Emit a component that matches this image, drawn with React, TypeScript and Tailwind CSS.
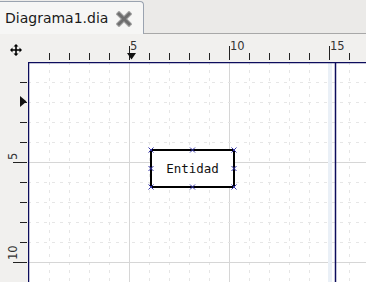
import React from "react";

const W = 366;

function HRuler() {
  const ticks: React.ReactNode[] = [];
  for (let k = 0; k < 17; k++) {
    const x = 21 + 20 * k;
    const major = (k + 1) % 5 === 0;
    ticks.push(
      <line key={k} x1={x + 0.5} x2={x + 0.5} y1={major ? 12 : 19} y2={26} stroke="#222" strokeWidth={1} />
    );
  }
  return (
    <svg width={338} height={28} className="block">
      {ticks}
      {[
        [102, "5"],
        [202, "10"],
        [302, "15"],
      ].map(([x, t]) => (
        <text key={t as string} x={x as number} y={15.5} fontSize={11.5} fill="#333" fontFamily="'DejaVu Sans', sans-serif">
          {t}
        </text>
      ))}
      <polygon points="99,19 108,19 103.5,25.5" fill="#111" />
    </svg>
  );
}

function VRuler() {
  const ticks: React.ReactNode[] = [];
  for (let k = 1; k < 12; k++) {
    const y = 20 * k;
    const major = k % 5 === 0;
    ticks.push(
      <line key={k} y1={y + 0.5} y2={y + 0.5} x1={major ? 13 : 20} x2={27} stroke="#222" strokeWidth={1} />
    );
  }
  return (
    <svg width={28} height={220} className="block">
      {ticks}
      <text transform="translate(16.5,98) rotate(-90)" fontSize={11.5} fill="#333" fontFamily="'DejaVu Sans', sans-serif">
        5
      </text>
      <text transform="translate(17,198) rotate(-90)" fontSize={11.5} fill="#333" fontFamily="'DejaVu Sans', sans-serif">
        10
      </text>
      <polygon points="20,34 26.5,39.5 20,45" fill="#111" />
    </svg>
  );
}

function Canvas() {
  const w = 338;
  const h = 220;
  const lines: React.ReactNode[] = [];
  for (let k = 1; k < 17; k++) {
    const x = 1 + 20 * k + 0.5;
    const major = k % 5 === 0;
    lines.push(
      <line key={"v" + k} x1={x} x2={x} y1={0} y2={h} stroke={major ? "#d6d6d6" : "#e6e6e6"} strokeWidth={1} strokeDasharray={major ? undefined : "3 5"} />
    );
  }
  for (let k = 1; k < 12; k++) {
    const y = 20 * k + 0.5;
    const major = k % 5 === 0;
    lines.push(
      <line key={"h" + k} x1={0} x2={w} y1={y} y2={y} stroke={major ? "#d6d6d6" : "#e6e6e6"} strokeWidth={1} strokeDasharray={major ? undefined : "3 5"} />
    );
  }
  const bx1 = 123;
  const by1 = 88;
  const bx2 = 206;
  const by2 = 125;
  const mx = (bx1 + bx2) / 2;
  const my = (by1 + by2) / 2;
  const handles = [
    [bx1, by1],
    [mx, by1],
    [bx2, by1],
    [bx1, my],
    [bx2, my],
    [bx1, by2],
    [mx, by2],
    [bx2, by2],
  ];
  return (
    <svg width={w} height={h} className="block bg-white">
      {lines}
      <rect x={300} y={0} width={4} height={h} fill="#eaf0f7" />
      <line x1={307.5} x2={307.5} y1={0} y2={h} stroke="#0c0c5c" strokeWidth={1.5} />
      <line x1={0} x2={w} y1={0.5} y2={0.5} stroke="#0c0c5c" strokeWidth={1.5} />
      <line x1={0.5} x2={0.5} y1={0} y2={h} stroke="#0c0c5c" strokeWidth={1.5} />
      <rect x={bx1} y={by1} width={bx2 - bx1} height={by2 - by1} fill="white" stroke="#000" strokeWidth={2} />
      <text x={mx} y={by1 + 22.5} textAnchor="middle" fontSize={12.5} fill="#111" fontFamily="'DejaVu Sans Mono', monospace">
        Entidad
      </text>
      {handles.map(([x, y], i) => (
        <g key={i} stroke="#3535a8" strokeWidth={1}>
          <line x1={x - 2.5} y1={y - 2.5} x2={x + 2.5} y2={y + 2.5} />
          <line x1={x - 2.5} y1={y + 2.5} x2={x + 2.5} y2={y - 2.5} />
        </g>
      ))}
    </svg>
  );
}

function MoveIcon() {
  return (
    <svg width={12} height={12} viewBox="0 0 12 12" className="block">
      <path d="M6 0 L8.5 2.5 L6.8 2.5 L6.8 5.2 L9.5 5.2 L9.5 3.5 L12 6 L9.5 8.5 L9.5 6.8 L6.8 6.8 L6.8 9.5 L8.5 9.5 L6 12 L3.5 9.5 L5.2 9.5 L5.2 6.8 L2.5 6.8 L2.5 8.5 L0 6 L2.5 3.5 L2.5 5.2 L5.2 5.2 L5.2 2.5 L3.5 2.5 Z" fill="#000" />
    </svg>
  );
}

function CloseIcon() {
  return (
    <svg width={16} height={16} viewBox="0 0 16 16" className="block">
      <g strokeLinecap="square">
        <line x1={3} y1={3} x2={13} y2={13} stroke="#a9a9a9" strokeWidth={5} />
        <line x1={13} y1={3} x2={3} y2={13} stroke="#a9a9a9" strokeWidth={5} />
        <line x1={3} y1={3} x2={13} y2={13} stroke="#6e6e6e" strokeWidth={3} />
        <line x1={13} y1={3} x2={3} y2={13} stroke="#6e6e6e" strokeWidth={3} />
      </g>
    </svg>
  );
}

export default function App() {
  return (
    <div className="w-[366px] h-[282px] overflow-hidden bg-[#edecea] flex flex-col" style={{ width: W }}>
      <div className="h-[34px] flex shrink-0">
        <div className="w-[144px] h-full mt-[1px] bg-[#f6f6f5] border-t border-r border-[#9aa3b0] rounded-tr-[4px] flex items-center pl-[5px] gap-[8px]">
          <span className="text-[14px] text-[#1a1a1a] font-['DejaVu_Sans',sans-serif] leading-none pb-[1px]">Diagrama1.dia</span>
          <CloseIcon />
        </div>
        <div className="flex-1 h-full bg-[#ebeae8] border-b border-[#a8a8a8]" />
      </div>
      <div className="flex flex-1 bg-[#f1f0ee]">
        <div className="w-[28px] flex flex-col shrink-0">
          <div className="h-[28px] flex items-center justify-center pt-[3px] pl-[3px]">
            <MoveIcon />
          </div>
          <VRuler />
        </div>
        <div className="flex flex-col">
          <HRuler />
          <Canvas />
        </div>
      </div>
    </div>
  );
}
